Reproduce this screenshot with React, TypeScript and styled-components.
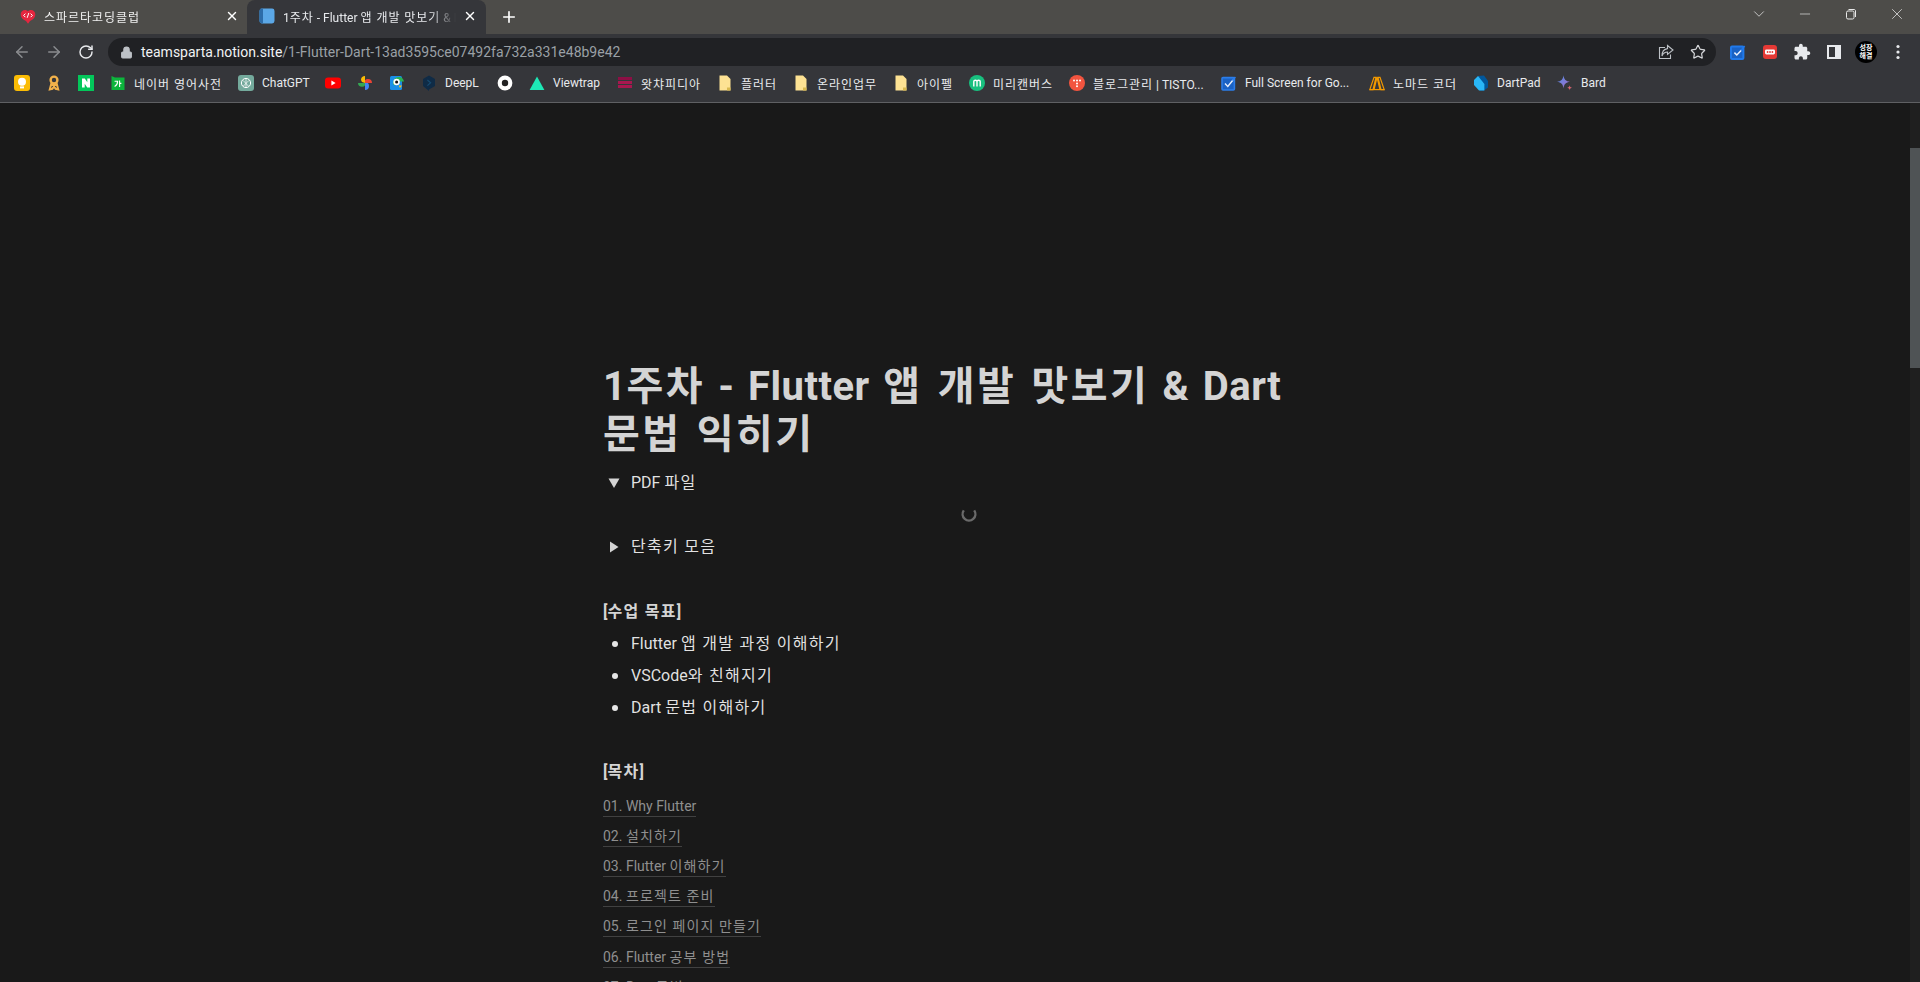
import React from 'react';
import styled, { createGlobalStyle } from 'styled-components';
import { ArrowLeft, ArrowRight, RotateCw, Lock, Star, X, Plus, ChevronDown, Minus } from 'lucide-react';

const UI_FONT = `Roboto, "Noto Sans CJK KR", sans-serif`;

const GlobalStyle = createGlobalStyle`
  html, body {
    margin: 0;
    height: 100%;
    overflow: hidden;
    background: #191919;
  }
  * {
    box-sizing: border-box;
  }
`;

const Window = styled.div`
  width: 100vw;
  height: 100vh;
  display: flex;
  flex-direction: column;
  overflow: hidden;
  font-family: ${UI_FONT};
`;

// hangul in the reference sits on a full em, the installed CJK font is narrower
const Ko = styled.span`
  letter-spacing: var(--ko-spacing, 0.08em);
`;

function ko(text: string) {
  return text.split(/([\uac00-\ud7a3]+(?: [\uac00-\ud7a3]+)*)/).map((part, i) =>
    /[\uac00-\ud7a3]/.test(part) ? <Ko key={i}>{part}</Ko> : part
  );
}

const TabStrip = styled.div`
  height: 34px;
  flex: none;
  background: #4d4c49;
  display: flex;
  align-items: flex-end;
  color: #fff;
`;

const Tab = styled.div<{ $active?: boolean; $width: number; $left: number; $right: number }>`
  width: ${p => p.$width}px;
  height: 34px;
  display: flex;
  align-items: center;
  padding: 0 ${p => p.$right}px 2px ${p => p.$left}px;
  border-radius: 8px 8px 0 0;
  background: ${p => (p.$active ? '#35363a' : 'transparent')};
  color: ${p => (p.$active ? '#e8eaed' : '#f1f1f1')};
`;

const TabTitle = styled.span`
  flex: 1;
  min-width: 0;
  margin-left: 8px;
  font-size: 12px;
  white-space: nowrap;
  overflow: hidden;
  -webkit-mask-image: linear-gradient(to right, #000 85%, transparent);
  mask-image: linear-gradient(to right, #000 85%, transparent);
`;

const TabClose = styled.span`
  flex: none;
  width: 16px;
  height: 16px;
  margin-left: 6px;
  display: flex;
  align-items: center;
  justify-content: center;
  color: #fff;
`;

const NewTab = styled.span`
  width: 28px;
  height: 28px;
  margin: 0 0 3px 9px;
  display: flex;
  align-items: center;
  justify-content: center;
`;

const Spacer = styled.div`
  flex: 1;
  min-width: 0;
`;

const WindowControl = styled.span`
  width: 46px;
  height: 28px;
  margin-bottom: 6px;
  display: flex;
  align-items: center;
  justify-content: center;
  color: #e8e8e8;
`;

const Toolbar = styled.div`
  height: 32px;
  flex: none;
  background: #35363a;
  display: flex;
  align-items: flex-end;
  padding: 0 6px;
`;

const ToolButton = styled.span<{ $dim?: boolean }>`
  width: 32px;
  height: 28px;
  flex: none;
  display: flex;
  align-items: center;
  justify-content: center;
  color: ${p => (p.$dim ? '#8a8c8f' : '#e8eaed')};
`;

const Omnibox = styled.div`
  flex: 1;
  height: 28px;
  margin: 0 6px;
  background: #202124;
  border-radius: 14px;
  display: flex;
  align-items: center;
  padding: 0 2px 0 12px;
`;

const Url = styled.div`
  flex: 1;
  margin-left: 8px;
  font-size: 14px;
  color: #9aa0a6;
  white-space: nowrap;
`;

const UrlHost = styled.span`
  color: #f1f3f4;
`;

const Avatar = styled.span`
  width: 22px;
  height: 22px;
  border-radius: 50%;
  background: #000;
  color: #fff;
  font-size: 7px;
  font-weight: 700;
  line-height: 8px;
  text-align: center;
  display: flex;
  align-items: center;
  justify-content: center;
`;

const BookmarkBar = styled.div`
  height: 37px;
  flex: none;
  background: #35363a;
  border-bottom: 1px solid #5f6063;
  display: flex;
  align-items: center;
  padding: 0 0 2px 6px;
`;

const Bookmark = styled.div`
  height: 28px;
  flex: none;
  padding: 0 8px;
  display: flex;
  align-items: center;
  gap: 8px;
`;

const BookmarkLabel = styled.span<{ $width: number }>`
  display: block;
  width: ${p => p.$width}px;
  font-size: 12px;
  color: #e8eaed;
  white-space: nowrap;
`;

const Viewport = styled.div`
  flex: 1;
  min-height: 0;
  display: flex;
  background: #191919;
`;

const PageScroll = styled.main`
  flex: 1;
  min-width: 0;
  display: flex;
  justify-content: center;
  overflow: hidden;
`;

const Scrollbar = styled.div`
  width: 10px;
  flex: none;
  padding-top: 45px;
  background: #1f1f1f;
`;

const ScrollThumb = styled.div`
  height: 220px;
  background: #4f5355;
`;

const Article = styled.article`
  width: 708px;
  padding: 260px 2px 0;
  color: rgba(255, 255, 255, 0.88);
  font-size: 16px;
  line-height: 24px;
`;

const Title = styled.h1`
  --ko-spacing: 0.06em;
  margin: 0 0 11px;
  font-size: 40px;
  line-height: 48px;
  font-weight: 700;
  letter-spacing: 0.5px;
  word-spacing: 3px;
  color: #d4d4d4;
  max-width: 690px;
`;

const ToggleRow = styled.div`
  height: 26px;
  display: flex;
  align-items: center;
`;

const ToggleMark = styled.span`
  width: 28px;
  flex: none;
  padding-left: 5px;
  display: flex;
  align-items: center;
`;

const EmbedLoading = styled.div`
  height: 38px;
  margin-left: 27px;
  display: flex;
  align-items: center;
  justify-content: center;
`;

const SectionHead = styled.div<{ $top: number }>`
  margin-top: ${p => p.$top}px;
  font-weight: 700;
  font-size: 16px;
  line-height: 26px;
  color: #d4d4d4;
`;

const Bullets = styled.ul`
  list-style: none;
  margin: 3px 0 0;
  padding: 0;
`;

const Bullet = styled.li`
  height: 32px;
  display: flex;
  align-items: center;
  white-space: pre;
  &::before {
    content: '';
    width: 6px;
    height: 6px;
    margin: 0 13px 0 9px;
    border-radius: 50%;
    background: #e6e6e6;
    flex: none;
  }
`;

const TocList = styled.div`
  margin-top: 7px;
`;

const TocRow = styled.div`
  height: 30.1px;
  display: flex;
  align-items: center;
`;

const TocLink = styled.a`
  font-size: 14px;
  line-height: 19px;
  color: #8f8f8f;
  border-bottom: 1px solid #414141;
`;

function Heart() {
  return (
    <svg width="16" height="16" viewBox="0 0 16 16">
      <path d="M8 15.8 6 13C2.5 11.5.7 9 .7 6.4.7 3.8 2.8 2 5 2c1.3 0 2.3.6 3 1.4C8.7 2.6 9.7 2 11 2c2.2 0 4.3 1.8 4.3 4.4 0 2.6-1.8 5.1-5.3 6.6z" fill="#e5263f" />
      <path d="M5.4 5.6 3.6 7.4l1.8 1.8M10.6 5.6l1.8 1.8-1.8 1.8M8.8 5 7.2 9.8" fill="none" stroke="#fff" strokeWidth="1" />
    </svg>
  );
}

function BookFavicon() {
  return (
    <svg width="16" height="16" viewBox="0 0 16 16">
      <rect x=".5" y=".5" width="15" height="15" rx="2.4" fill="#5ba7e6" />
      <path d="M2.9.5H4v15H2.9A2.4 2.4 0 0 1 .5 13.1V2.9A2.4 2.4 0 0 1 2.9.5z" fill="#2d6ca8" />
    </svg>
  );
}

function Folder() {
  return (
    <svg width="16" height="16" viewBox="0 0 16 16">
      <path d="M2.5.5h7.5l3.5 3.5v11.5h-11z" fill="#fde293" />
      <path d="M10 12.5h3.5v3H10z" fill="#d8b94f" />
    </svg>
  );
}

const icons: Record<string, React.ReactNode> = {
  bulb: (
    <svg width="16" height="16" viewBox="0 0 16 16">
      <rect width="16" height="16" rx="3" fill="#fbbc04" />
      <circle cx="8" cy="6.8" r="4" fill="#fff" />
      <rect x="6" y="11.4" width="4" height="2" fill="#fff" />
    </svg>
  ),
  ribbon: (
    <svg width="16" height="16" viewBox="0 0 16 16">
      <circle cx="8" cy="5" r="3.4" fill="none" stroke="#f2b14a" strokeWidth="2.4" />
      <path d="M5.6 7.6 3.8 14.4l2.6-.6L10.4 7.6M10.4 7.6l1.8 6.8-2.6-.6L5.6 7.6" fill="none" stroke="#f2b14a" strokeWidth="2" />
    </svg>
  ),
  naver: (
    <svg width="16" height="16" viewBox="0 0 16 16">
      <rect width="16" height="16" fill="#03c75a" />
      <path d="M4 3.5h2.8l2.5 3.8V3.5H12v9H9.2L6.7 8.7v3.8H4z" fill="#fff" />
    </svg>
  ),
  dict: (
    <svg width="16" height="16" viewBox="0 0 16 16">
      <path d="M1.5 1 5 2.6h9.5V15h-13z" fill="#0cb53c" />
      <path d="M4.6 6.2h3c0 2.6-.9 4.2-3 5.2M9.6 5.4v6.6M9.6 8.4h1.8" fill="none" stroke="#fff" strokeWidth="1.1" />
    </svg>
  ),
  gpt: (
    <svg width="16" height="16" viewBox="0 0 16 16">
      <rect width="16" height="16" rx="3" fill="#74aa9c" />
      <circle cx="8" cy="8" r="4.6" fill="none" stroke="#fff" strokeWidth="1" />
      <path d="M5 5.4 10.4 11M11 5.4 5.4 11M8 3.4v9.2" stroke="#fff" strokeWidth=".7" />
    </svg>
  ),
  youtube: (
    <svg width="16" height="16" viewBox="0 0 16 16">
      <rect y="2.4" width="16" height="11.2" rx="3" fill="#f00" />
      <path d="m6.4 5.6 4.2 2.4-4.2 2.4z" fill="#fff" />
    </svg>
  ),
  photos: (
    <svg width="16" height="16" viewBox="0 0 16 16">
      <path d="M8 8V1a4 4 0 0 0-4 3.6A4 4 0 0 0 5 7z" fill="#fbbc04" />
      <path d="M8 8h7a4 4 0 0 0-4-4 4 4 0 0 0-3 1.2z" fill="#ea4335" />
      <path d="M8 8v7a4 4 0 0 0 4-4 4 4 0 0 0-1-3z" fill="#4285f4" />
      <path d="M8 8H1a4 4 0 0 0 4 3.8 4 4 0 0 0 3-1.2z" fill="#34a853" />
    </svg>
  ),
  parrot: (
    <svg width="16" height="16" viewBox="0 0 16 16">
      <rect x="1" y="1" width="12" height="14" rx="1.5" fill="#1a8fe8" />
      <path d="M4 9c0-4.6 2.8-7 6-7 2.6 0 4.6 1.8 5 4.6H9.4C7.6 6.6 6 7.6 6 10.8z" fill="#29b352" />
      <circle cx="7.6" cy="7" r="3.2" fill="#fff" />
      <circle cx="7.6" cy="7" r="1.5" fill="#111" />
      <path d="M9.6 10.4h3.4L11 13z" fill="#f8c31a" />
    </svg>
  ),
  deepl: (
    <svg width="16" height="16" viewBox="0 0 16 16">
      <path d="M8 .5l6 3.4v7.2L8 14.5V16l-1.8-1.4L2 11.1V3.9z" fill="#0f2b46" />
      <path d="m6.4 5 3.2 2.8-3.2 2.8" fill="none" stroke="#174a6f" strokeWidth="1.2" />
    </svg>
  ),
  disc: (
    <svg width="16" height="16" viewBox="0 0 16 16">
      <circle cx="8" cy="8" r="7.4" fill="#fff" />
      <circle cx="8" cy="8" r="3.2" fill="#222" />
    </svg>
  ),
  triangle: (
    <svg width="16" height="16" viewBox="0 0 16 16">
      <path d="M8 1.4 15.4 15H.6z" fill="#1de9b6" />
    </svg>
  ),
  m: (
    <svg width="16" height="16" viewBox="0 0 16 16">
      <circle cx="8" cy="8" r="8" fill="#18c07f" />
      <path d="M4.8 11.4V6.6c0-1.8 3.2-1.8 3.2 0v4.8M8 6.6c0-1.8 3.2-1.8 3.2 0v4.8" fill="none" stroke="#fff" strokeWidth="1.4" />
    </svg>
  ),
  tistory: (
    <svg width="16" height="16" viewBox="0 0 16 16">
      <circle cx="8" cy="8" r="8" fill="#f2543f" />
      <g fill="#fff">
        <circle cx="5" cy="5.6" r="1" />
        <circle cx="8" cy="5.6" r="1" />
        <circle cx="11" cy="5.6" r="1" />
        <circle cx="8" cy="8.4" r="1" />
        <circle cx="8" cy="11.2" r="1" />
      </g>
    </svg>
  ),
  check: (
    <svg width="16" height="16" viewBox="0 0 16 16">
      <rect x="1" y="2.6" width="12.4" height="12.4" rx="1" fill="#1a62c4" stroke="#2b7de9" strokeWidth="1.6" />
      <path d="m4 8.6 2.8 2.8L12 5" fill="none" stroke="#e8f0fe" strokeWidth="1.4" />
      <path d="m11.4 5.6 3-3.6" fill="none" stroke="#2b7de9" strokeWidth="1.6" />
    </svg>
  ),
  nomad: (
    <svg width="16" height="16" viewBox="0 0 16 16">
      <path d="M.8 14.6 5 2.4h2l-3 12.2zM5 14.6 8 2.4l3 12.2M15.2 14.6 11 2.4H9l3 12.2z" fill="none" stroke="#f29900" strokeWidth="1.2" />
      <path d="M.8 14.6h14.4" stroke="#f29900" strokeWidth="1.2" />
    </svg>
  ),
  dart: (
    <svg width="16" height="16" viewBox="0 0 16 16">
      <path d="M5 1 11 .6l4 5.4v6.4L11 15.6H7z" fill="#01579b" />
      <path d="M5 1 11.4 9v6.6H6L1 10V5z" fill="#29b6f6" />
    </svg>
  ),
  bard: (
    <svg width="16" height="16" viewBox="0 0 16 16">
      <defs>
        <linearGradient id="bardStar" x1="0" y1="0" x2="1" y2="1">
          <stop offset="0" stopColor="#4e8fe8" />
          <stop offset="1" stopColor="#a868c8" />
        </linearGradient>
      </defs>
      <path d="M6.5.2C7 4.4 8.8 6.2 13 6.8 8.8 7.4 7 9.2 6.5 13.4 6 9.2 4.2 7.4 0 6.8 4.2 6.2 6 4.4 6.5.2z" fill="url(#bardStar)" />
      <path d="M12.6 10.2c.2 1.6.9 2.3 2.6 2.6-1.7.3-2.4 1-2.6 2.6-.2-1.6-.9-2.3-2.6-2.6 1.7-.3 2.4-1 2.6-2.6z" fill="#d96570" />
    </svg>
  ),
  pedia: (
    <svg width="16" height="16" viewBox="0 0 16 16">
      <rect x="1" y="2" width="14" height="3" fill="#8d0f45" />
      <rect x="1" y="6" width="14" height="3" fill="#a8174f" />
      <rect x="1" y="10" width="14" height="3" fill="#a8174f" />
    </svg>
  ),
};

const bookmarks: { icon: React.ReactNode; label?: string; w?: number }[] = [
  { icon: icons.bulb },
  { icon: icons.ribbon },
  { icon: icons.naver },
  { icon: icons.dict, label: '네이버 영어사전', w: 88 },
  { icon: icons.gpt, label: 'ChatGPT', w: 47 },
  { icon: icons.youtube },
  { icon: icons.photos },
  { icon: icons.parrot },
  { icon: icons.deepl, label: 'DeepL', w: 36 },
  { icon: icons.disc },
  { icon: icons.triangle, label: 'Viewtrap', w: 48 },
  { icon: icons.pedia, label: '왓챠피디아', w: 60 },
  { icon: <Folder />, label: '플러터', w: 36 },
  { icon: <Folder />, label: '온라인업무', w: 60 },
  { icon: <Folder />, label: '아이펠', w: 36 },
  { icon: icons.m, label: '미리캔버스', w: 60 },
  { icon: icons.tistory, label: '블로그관리 | TISTO...', w: 112 },
  { icon: icons.check, label: 'Full Screen for Go...', w: 108 },
  { icon: icons.nomad, label: '노마드 코더', w: 64 },
  { icon: icons.dart, label: 'DartPad', w: 44 },
  { icon: icons.bard, label: 'Bard', w: 26 },
];

const toc = ['01. Why Flutter', '02. 설치하기', '03. Flutter 이해하기', '04. 프로젝트 준비', '05. 로그인 페이지 만들기', '06. Flutter 공부 방법', '07. Dart 문법'];

export default function App() {
  return (
    <Window>
      <GlobalStyle />
      <TabStrip>
        <Tab $width={247} $left={20} $right={7}>
          <Heart />
          <TabTitle>{ko('스파르타코딩클럽')}</TabTitle>
          <TabClose><X size={14} strokeWidth={2.4} /></TabClose>
        </Tab>
        <Tab $active $width={239} $left={12} $right={8}>
          <BookFavicon />
          <TabTitle>{ko('1주차 - Flutter 앱 개발 맛보기 & Dart 문법 익히기')}</TabTitle>
          <TabClose><X size={14} strokeWidth={2.4} /></TabClose>
        </Tab>
        <NewTab><Plus size={18} strokeWidth={2.2} /></NewTab>
        <Spacer />
        <WindowControl><ChevronDown size={18} strokeWidth={1} /></WindowControl>
        <WindowControl><Minus size={16} strokeWidth={1} /></WindowControl>
        <WindowControl>
          <svg width="12" height="12" viewBox="0 0 12 12" fill="none" stroke="currentColor">
            <rect x="1.5" y="3" width="7.5" height="8" rx="1.5" />
            <path d="M3.5 1.5h5.5c1 0 1.5.5 1.5 1.5v6" />
          </svg>
        </WindowControl>
        <WindowControl><X size={18} strokeWidth={1} /></WindowControl>
      </TabStrip>
      <Toolbar>
        <ToolButton $dim><ArrowLeft size={18} strokeWidth={2} /></ToolButton>
        <ToolButton $dim><ArrowRight size={18} strokeWidth={2} /></ToolButton>
        <ToolButton><RotateCw size={16} strokeWidth={2.2} /></ToolButton>
        <Omnibox>
          <Lock size={13} color="#bdc1c6" fill="#bdc1c6" strokeWidth={2} />
          <Url><UrlHost>teamsparta.notion.site</UrlHost>/1-Flutter-Dart-13ad3595ce07492fa732a331e48b9e42</Url>
          <ToolButton>
            <svg width="16" height="16" viewBox="0 0 16 16" fill="none" stroke="#bdc1c6" strokeWidth="1.1">
              <path d="M7 3.5H1.5v11h11V10.5" />
              <path d="M9.5 1.5 15 6l-5.5 4.4V8C6.5 8 5 9.5 4 12c0-4 2-7 5.5-7.4z" />
            </svg>
          </ToolButton>
          <ToolButton><Star size={16} strokeWidth={1.8} color="#d5d7da" /></ToolButton>
        </Omnibox>
        <ToolButton>
          <svg width="16" height="16" viewBox="0 0 16 16">
            <rect x="1" y="2.6" width="12.4" height="12.4" rx="1" fill="#1a62c4" stroke="#2079ea" strokeWidth="2" />
            <path d="m4.4 8.6 2.4 2.4L11.6 6" fill="none" stroke="#e8f0fe" strokeWidth="1.5" />
            <path d="m11 6.6 3.6-4.6" fill="none" stroke="#2079ea" strokeWidth="1.6" />
          </svg>
        </ToolButton>
        <ToolButton>
          <svg width="16" height="16" viewBox="0 0 16 16">
            <rect x="1" y="1" width="14" height="14" rx="3" fill="#e53935" />
            <rect x="3" y="5.6" width="10" height="4.8" rx="1.4" fill="#fff" />
            <circle cx="5.6" cy="8" r=".9" fill="#e53935" />
            <circle cx="8" cy="8" r=".9" fill="#e53935" />
            <circle cx="10.4" cy="8" r=".9" fill="#e53935" />
          </svg>
        </ToolButton>
        <ToolButton>
          <svg width="18" height="18" viewBox="0 0 24 24" fill="#e8eaed">
            <path d="M20.5 11H19V7c0-1.1-.9-2-2-2h-4V3.5C13 2.12 11.88 1 10.5 1S8 2.12 8 3.5V5H4c-1.1 0-1.99.9-1.99 2v3.8H3.5c1.49 0 2.7 1.21 2.7 2.7s-1.21 2.7-2.7 2.7H2V20c0 1.1.9 2 2 2h3.8v-1.5c0-1.49 1.21-2.7 2.7-2.7 1.49 0 2.7 1.21 2.7 2.7V22H17c1.1 0 2-.9 2-2v-4h1.5c1.38 0 2.5-1.12 2.5-2.5S21.88 11 20.5 11z" />
          </svg>
        </ToolButton>
        <ToolButton>
          <svg width="14" height="14" viewBox="0 0 14 14">
            <path d="M0 0h14v14H0zM2 2v10h6V2z" fill="#e8eaed" fillRule="evenodd" />
          </svg>
        </ToolButton>
        <ToolButton><Avatar>성장<br />해결</Avatar></ToolButton>
        <ToolButton>
          <svg width="4" height="16" viewBox="0 0 4 16" fill="#e8eaed">
            <circle cx="2" cy="2.5" r="1.6" />
            <circle cx="2" cy="8" r="1.6" />
            <circle cx="2" cy="13.5" r="1.6" />
          </svg>
        </ToolButton>
      </Toolbar>
      <BookmarkBar>
        {bookmarks.map((b, i) => (
          <Bookmark key={i}>
            {b.icon}
            {b.label && <BookmarkLabel $width={b.w ?? 0}>{ko(b.label)}</BookmarkLabel>}
          </Bookmark>
        ))}
      </BookmarkBar>
      <Viewport>
        <PageScroll>
          <Article>
            <Title>{ko('1주차 - Flutter 앱 개발 맛보기 & Dart 문법 익히기')}</Title>
            <ToggleRow>
              <ToggleMark>
                <svg width="12" height="12" viewBox="0 0 12 12"><path d="M.5 1.5h11L6 11z" fill="#d4d4d4" /></svg>
              </ToggleMark>
              <span>{ko('PDF 파일')}</span>
            </ToggleRow>
            <EmbedLoading>
              <svg width="16" height="16" viewBox="0 0 16 16" fill="none" stroke="#6a6a6a" strokeWidth="2.4">
                <path d="M2.8 3.4a6.4 6.4 0 1 0 10.4 0" />
              </svg>
            </EmbedLoading>
            <ToggleRow>
              <ToggleMark>
                <svg width="12" height="12" viewBox="0 0 12 12"><path d="M2 .5v11L10.5 6z" fill="#d4d4d4" /></svg>
              </ToggleMark>
              <span>{ko('단축키 모음')}</span>
            </ToggleRow>
            <SectionHead $top={39}>{ko('[수업 목표]')}</SectionHead>
            <Bullets>
              <Bullet><span>{ko('Flutter 앱 개발 과정 이해하기')}</span></Bullet>
              <Bullet><span>{ko('VSCode와 친해지기')}</span></Bullet>
              <Bullet><span>{ko('Dart 문법 이해하기')}</span></Bullet>
            </Bullets>
            <SectionHead $top={35}>{ko('[목차]')}</SectionHead>
            <TocList>
              {toc.map(t => (
                <TocRow key={t}><TocLink>{ko(t)}</TocLink></TocRow>
              ))}
            </TocList>
          </Article>
        </PageScroll>
        <Scrollbar>
          <ScrollThumb />
        </Scrollbar>
      </Viewport>
    </Window>
  );
}
